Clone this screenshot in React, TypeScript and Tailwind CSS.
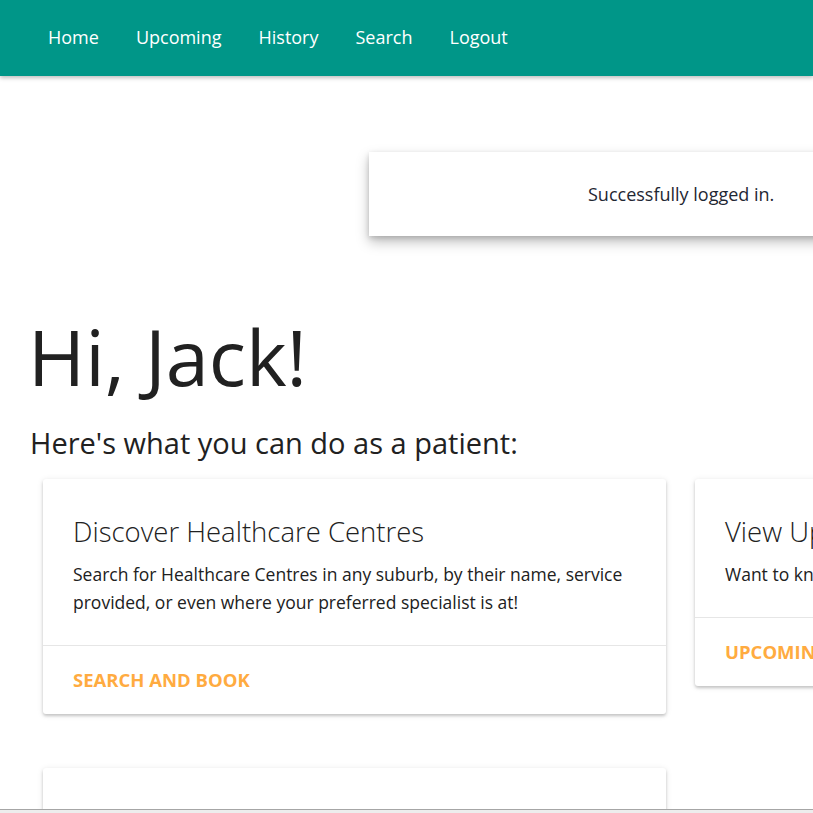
import React from "react";

const font = { fontFamily: '"Open Sans", "Noto Sans", sans-serif' };

const links = ["Home", "Upcoming", "History", "Search", "Logout"];

const cards = [
  {
    title: "Discover Healthcare Centres",
    body: "Search for Healthcare Centres in any suburb, by their name, service provided, or even where your preferred specialist is at!",
    action: "SEARCH AND BOOK",
  },
  {
    title: "View Upcoming Appointments",
    body: "Want to know when your next appointment is?",
    action: "UPCOMING",
  },
  {
    title: "View Appointment History",
    body: "View your past appointments and leave feedback.",
    action: "HISTORY",
  },
];

const Card = ({ title, body, action }: { title: string; body: string; action: string }) => (
  <div className="w-[623px] shrink-0 bg-white rounded-[3px] shadow-[0_2px_3px_rgba(0,0,0,0.18),0_1px_6px_rgba(0,0,0,0.1)] self-start">
    <div className="px-[30px] pt-[35px] pb-[29px]">
      <div className="text-[27.5px] leading-[36px] font-light text-[#212121] whitespace-nowrap">{title}</div>
      <p className="mt-[10px] text-[17.5px] leading-[28px] text-[#212121] pr-[8px]">{body}</p>
    </div>
    <div className="border-t border-[#e6e6e6] px-[30px] h-[69px] flex items-center">
      <span className="text-[18.5px] font-bold text-[#ffab40] whitespace-nowrap">{action}</span>
    </div>
  </div>
);

const App = () => {
  return (
    <div className="w-[813px] h-[813px] overflow-hidden bg-[#ededed]" style={font}>
      <div className="h-[810px] overflow-hidden bg-white border-b border-[#a6a6a6]">
        <nav className="h-[76px] bg-[#009688] shadow-[0_2px_4px_rgba(0,0,0,0.25)] flex items-center pb-[2px] pl-[48px] gap-[37px] relative z-10">
          {links.map((l) => (
            <span key={l} className="text-white text-[18px]">
              {l}
            </span>
          ))}
        </nav>

        <div className="mt-[76px] ml-[369px] w-[640px] h-[84px] bg-white shadow-[0_6px_12px_rgba(0,0,0,0.25),0_2px_5px_rgba(0,0,0,0.15)] flex items-center pl-[219px]">
          <span className="text-[18px] text-[#1f2733] whitespace-nowrap">Successfully logged in.</span>
        </div>

        <h1 className="mt-[72px] ml-[28px] text-[77.5px] leading-[96px] text-[#212121] whitespace-nowrap">Hi, Jack!</h1>
        <h2 className="mt-[21px] ml-[30px] text-[29px] leading-[36px] text-[#212121] whitespace-nowrap">
          Here's what you can do as a patient:
        </h2>

        <div className="mt-[18px] ml-[43px] flex flex-wrap gap-x-[29px] gap-y-[54px] w-[1275px]">
          {cards.map((c) => (
            <Card key={c.action} {...c} />
          ))}
        </div>
      </div>
    </div>
  );
};

export default App;
